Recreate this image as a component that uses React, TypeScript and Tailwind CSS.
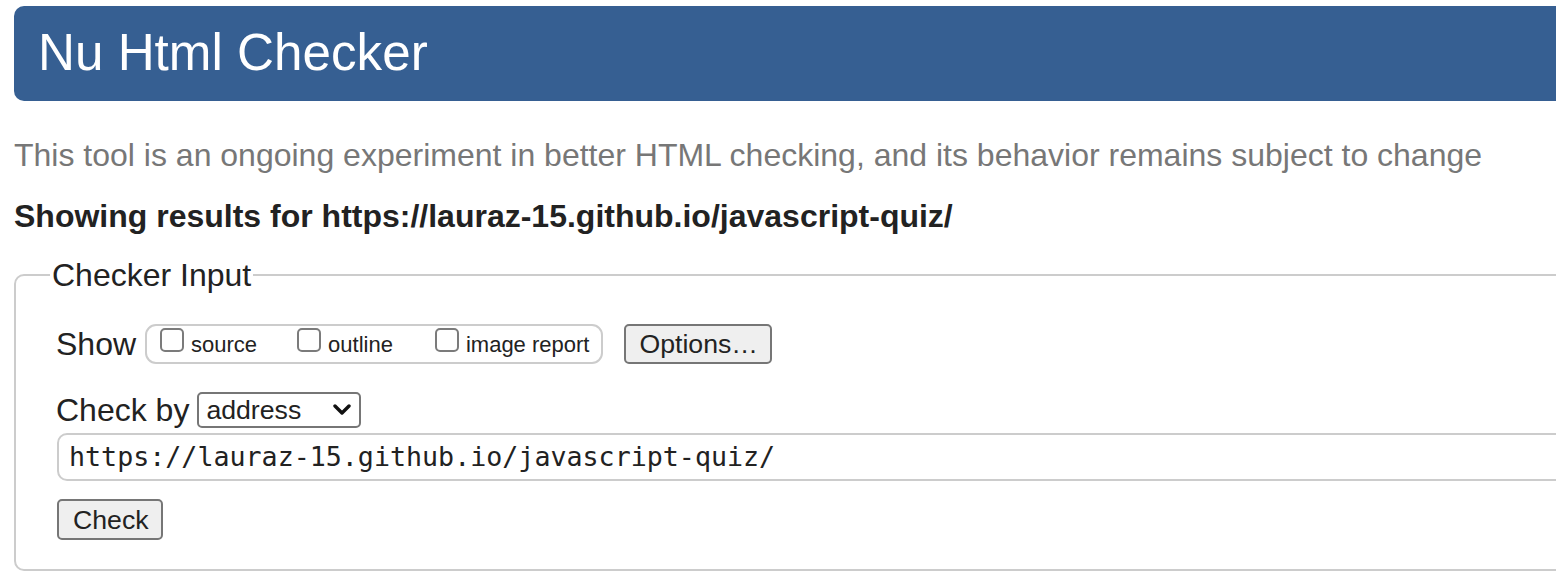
const Checkbox = () => (
  <span className="mb-[8px] inline-block h-[24px] w-[24px] rounded-[5px] border-2 border-[#7b7b7b] bg-white" />
);

const Option = ({ label, gap }: { label: string; gap: string }) => (
  <label className={`flex items-center ${gap}`}>
    <Checkbox />
    <span className="ml-[7px] text-[22px]">{label}</span>
  </label>
);

export default function App() {
  return (
    <div className="h-[582px] w-[1556px] overflow-hidden bg-white font-['Liberation_Sans',Arial,sans-serif] text-[#222]">
      <div className="w-[1640px] pl-[14px] pt-[6px]">
        <header className="flex h-[95px] items-center rounded-l-[10px] bg-[#365f92] pb-[2px] pl-[24px]">
          <h1 className="text-[51.2px] font-normal leading-none text-white">Nu Html Checker</h1>
        </header>

        <p className="mt-[35px] text-[32px] leading-[38px] text-[#777]">
          This tool is an ongoing experiment in better HTML checking, and its behavior remains subject to change
        </p>
        <p className="mt-[23px] text-[32px] font-bold leading-[38px]">
          Showing results for https://lauraz-15.github.io/javascript-quiz/
        </p>

        <fieldset className="mt-[21px] rounded-[10px] border-2 border-[#ccc] pb-[29px]">
          <legend className="ml-[34px] px-[2px] text-[32px] leading-[38px]">Checker Input</legend>
          <div className="pl-[41px]">
            <div className="mt-[30px] flex h-[40px] items-center">
              <span className="-ml-[1px] text-[32px] leading-[38px]">Show</span>
              <div className="ml-[9px] flex h-[40px] items-center rounded-[11px] border-2 border-[#ccc] pl-[13px] pr-[12px]">
                <Option label="source" gap="" />
                <Option label="outline" gap="ml-[40px]" />
                <Option label="image report" gap="ml-[42px]" />
              </div>
              <button className="ml-[21px] flex h-[40px] w-[148px] items-center rounded-[5px] border-2 border-[#767676] bg-[#efefef] px-[13px] text-[26.67px]">
                Options…
              </button>
            </div>

            <div className="mt-[28px] flex h-[36px] items-center">
              <span className="-ml-[1px] text-[32px] leading-[38px]">Check by</span>
              <div className="ml-[8px] flex h-[36px] w-[164px] items-center justify-between rounded-[5px] border-2 border-[#767676] bg-white pl-[7px] pr-[8px]">
                <span className="text-[26.67px]">address</span>
                <svg width="18" height="12" viewBox="0 0 18 12">
                  <polyline points="2,2 9,9 16,2" fill="none" stroke="#111" strokeWidth="3.4" strokeLinecap="round" strokeLinejoin="round" />
                </svg>
              </div>
            </div>

            <div className="mt-[5px] flex h-[48px] items-center rounded-[10px] border-2 border-[#ccc] pl-[10px] font-['DejaVu_Sans_Mono',monospace] text-[26.67px]">
              https://lauraz-15.github.io/javascript-quiz/
            </div>

            <button className="mt-[18px] flex h-[41px] w-[106px] items-center rounded-[5px] border-2 border-[#767676] bg-[#efefef] px-[14px] text-[26.67px]">
              Check
            </button>
          </div>
        </fieldset>
      </div>
    </div>
  );
}
